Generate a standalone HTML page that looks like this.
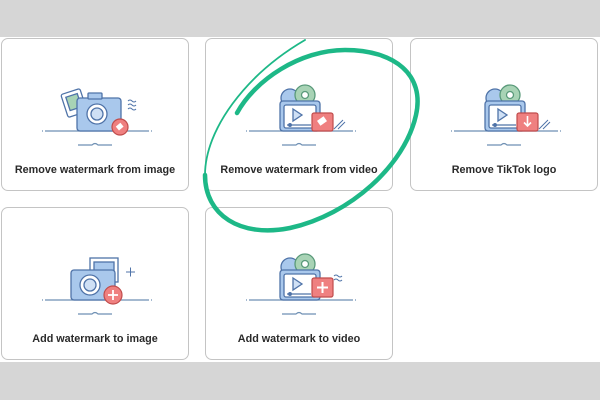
<!DOCTYPE html>
<html><head><style>
body{margin:0;width:600px;height:400px;background:#d6d6d6;position:relative;overflow:hidden;font-family:"Liberation Sans",sans-serif}
.w{position:absolute;left:0;top:37px;width:600px;height:325px;background:#fff}
.c{position:absolute;width:188px;height:153px;border:1px solid #c4c4c4;border-radius:7px;background:#fff;box-sizing:border-box}
.t{position:absolute;left:0;right:0;top:125px;text-align:center;font-weight:bold;font-size:10.8px;color:#2a2a2a}
svg.i{position:absolute;left:40px;top:40px}
</style></head><body>
<div class="w"></div>
<svg width="0" height="0" style="position:absolute">
<defs>
<g id="base" stroke="#6d8fb3" stroke-width="1.2" fill="none"><path d="M3 52H107M0 52h1M109 52h1M36 66h14q3-3 6 0h14"/></g>
<g id="vid" stroke="#4f73a8" stroke-width="1.3">
<circle cx="44" cy="19" r="9" fill="#a9c8ec"/><circle cx="59" cy="16" r="10" fill="#a8d3b5" stroke="#5a9a7a"/><circle cx="59" cy="16" r="3.5" fill="#fff" stroke="#5a9a7a"/>
<rect x="34" y="22" width="40" height="30" rx="3" fill="#a9c8ec"/><rect x="38" y="26" width="32" height="23" rx="2" fill="#fff"/>
<path d="M47 30l9 6-9 6z" fill="#cfe0f5"/><path d="M41 46h24" /><circle cx="44" cy="46" r="1.3" fill="#4f73a8"/></g>
</defs></svg>

<div class="c" style="left:1px;top:38px">
<svg class="i" width="110" height="70"><use href="#base"/>
<g stroke="#4f73a8" stroke-width="1.3"><rect x="22" y="12" width="20" height="24" rx="2" fill="#fff" transform="rotate(-18 32 24)"/><rect x="26" y="16" width="12" height="14" fill="#a8d3b5" transform="rotate(-18 32 24)"/>
<rect x="35" y="19" width="44" height="33" rx="3" fill="#a9c8ec"/><rect x="46" y="14" width="14" height="6" rx="1" fill="#a9c8ec"/><circle cx="55" cy="35" r="10" fill="#fff"/><circle cx="55" cy="35" r="6" fill="#cfe0f5"/></g>
<circle cx="78" cy="48" r="8" fill="#ef8080" stroke="#c04c4c" stroke-width="1.2"/><rect x="75" y="45" width="6" height="5" fill="#fff" transform="rotate(-40 78 48)"/>
<path d="M86 22q2-2 4 0t4 0M86 26q2-2 4 0t4 0M86 30q2-2 4 0t4 0" stroke="#4f73a8" fill="none"/></svg>
<div class="t">Remove watermark from image</div></div>

<div class="c" style="left:205px;top:38px">
<svg class="i" width="110" height="70"><use href="#base"/><use href="#vid"/>
<rect x="66" y="34" width="21" height="18" rx="2" fill="#ef8080" stroke="#c04c4c" stroke-width="1.2"/><rect x="72" y="39" width="8" height="6" fill="#fff" transform="rotate(-35 76 42)"/>
<path d="M88 50l9-9M92 50l7-7" stroke="#4f73a8"/></svg>
<div class="t">Remove watermark from video</div></div>

<div class="c" style="left:410px;top:38px">
<svg class="i" width="110" height="70"><use href="#base"/><use href="#vid"/>
<rect x="66" y="34" width="21" height="18" rx="2" fill="#ef8080" stroke="#c04c4c" stroke-width="1.2"/><path d="M76.5 37v10M73 43.5l3.5 3.5 3.5-3.5" stroke="#fff" stroke-width="1.6" fill="none"/>
<path d="M88 50l9-9M92 50l7-7" stroke="#4f73a8"/></svg>
<div class="t">Remove TikTok logo</div></div>

<div class="c" style="left:1px;top:207px">
<svg class="i" width="110" height="70"><use href="#base"/>
<g stroke="#4f73a8" stroke-width="1.3"><rect x="48" y="10" width="28" height="24" fill="#fff"/><rect x="52" y="14" width="20" height="16" fill="#a9c8ec"/>
<rect x="29" y="22" width="44" height="30" rx="3" fill="#a9c8ec"/><circle cx="48" cy="37" r="10" fill="#fff"/><circle cx="48" cy="37" r="6" fill="#cfe0f5"/></g>
<circle cx="71" cy="47" r="9" fill="#ef8080" stroke="#c04c4c" stroke-width="1.2"/><path d="M71 42v10M66 47h10" stroke="#fff" stroke-width="1.8"/>
<path d="M84 24h9M88.5 19.5v9" stroke="#4f73a8"/></svg>
<div class="t">Add watermark to image</div></div>

<div class="c" style="left:205px;top:207px">
<svg class="i" width="110" height="70"><use href="#base"/><use href="#vid"/>
<rect x="66" y="30" width="21" height="19" rx="2" fill="#ef8080" stroke="#c04c4c" stroke-width="1.2"/><path d="M76.5 34v11M71 39.5h11" stroke="#fff" stroke-width="2"/>
<path d="M88 28q2-2 4 0t4 0M88 32q2-2 4 0t4 0" stroke="#4f73a8" fill="none"/></svg>
<div class="t">Add watermark to video</div></div>

<svg width="600" height="400" style="position:absolute;left:0;top:0">
<path d="M237 113C255 80 300 50 345 50C395 50 425 75 416 115C405 165 350 215 290 228C240 238 205 215 205 175" fill="none" stroke="#1db887" stroke-width="4.5" stroke-linecap="round"/>
<path d="M205 175C205 130 245 75 305 40" fill="none" stroke="#1db887" stroke-width="1.8" stroke-linecap="round"/>
</svg>
</body></html>
